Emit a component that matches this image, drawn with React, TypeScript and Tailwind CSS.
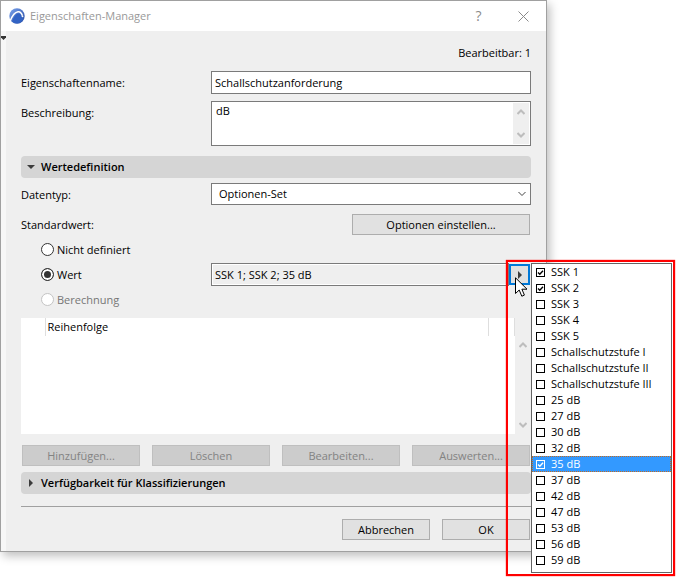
import { useState } from 'react'
import type { ReactNode } from 'react'

const OPTIONS = [
  'SSK 1', 'SSK 2', 'SSK 3', 'SSK 4', 'SSK 5',
  'Schallschutzstufe I', 'Schallschutzstufe II', 'Schallschutzstufe III',
  '25 dB', '27 dB', '30 dB', '32 dB', '35 dB', '37 dB', '42 dB', '47 dB', '53 dB', '56 dB', '59 dB',
]

function AppLogo() {
  return (
    <svg viewBox="0 0 16 16" className="h-4 w-4 shrink-0" aria-hidden="true">
      <defs>
        <linearGradient id="logo" x1="0" y1="0" x2="1" y2="1">
          <stop offset="0" stopColor="#7ba4ee" />
          <stop offset="1" stopColor="#2347a0" />
        </linearGradient>
      </defs>
      <circle cx="8" cy="8" r="7.7" fill="url(#logo)" />
      <path d="M1.300 12.800C3 8.200 5.600 4.300 9 3.700c2-0.300 3.600 1.300 4.400 4" fill="none" stroke="#fff" strokeWidth="1.500" />
      <path d="M3 13.600C4.600 9.400 6.500 6 9.200 5.400c2.400 0 3.900 3 4.600 6.600-2.300 3.600-7.600 4.600-10.800 1.600z" fill="#3263c4" />
      <circle cx="13.500" cy="8.300" r="0.900" fill="#fff" />
    </svg>
  )
}

function Triangle({ open = false }: { open?: boolean }) {
  return (
    <svg viewBox="0 0 8 8" className="h-2 w-2 shrink-0 fill-[#3c3c3c]" aria-hidden="true">
      {open ? <path d="M0 2h8L4 6z" /> : <path d="M2 0v8L6 4z" />}
    </svg>
  )
}

function Chevron({ up = false, className = '' }: { up?: boolean; className?: string }) {
  return (
    <svg viewBox="0 0 8 6" className={`h-1.5 w-2 fill-none ${className}`} aria-hidden="true">
      <path d={up ? 'M0.500 5L4 1.500L7.500 5' : 'M0.500 1L4 4.500L7.500 1'} />
    </svg>
  )
}

function ScrollTrack({ className = '' }: { className?: string }) {
  return (
    <div className={`flex w-4 shrink-0 flex-col items-center justify-between bg-[#efefef] ${className}`}>
      <Chevron up className="stroke-[#bdbdbd] stroke-2" />
      <Chevron className="stroke-[#bdbdbd] stroke-2" />
    </div>
  )
}

function PushButton({ children, disabled = false, className = '' }: { children: ReactNode; disabled?: boolean; className?: string }) {
  return (
    <button
      type="button"
      disabled={disabled}
      className={`h-[21px] border border-[#adadad] bg-[#e1e1e1] leading-4 disabled:border-[#bfbfbf] disabled:bg-[#cccccc] disabled:text-[#838383] ${className}`}
    >
      {children}
    </button>
  )
}

function SectionHeader({ title, open = false }: { title: string; open?: boolean }) {
  return (
    <button type="button" aria-expanded={open} className="flex h-[22px] w-full items-center gap-1.5 rounded-sm bg-[#d5d5d5] pl-1.5 text-left font-semibold">
      <Triangle open={open} />
      {title}
    </button>
  )
}

function RadioOption({ label, value, disabled = false, selected, onSelect }: { label: string; value: string; disabled?: boolean; selected: string; onSelect: (value: string) => void }) {
  return (
    <label className={`flex h-[25px] items-center gap-[3px] pl-5 ${disabled ? 'text-[#767676]' : ''}`}>
      <input
        type="radio"
        name="default-value"
        value={value}
        disabled={disabled}
        checked={selected === value}
        onChange={() => onSelect(value)}
        className="h-[13px] w-[13px] appearance-none rounded-full border border-[#333333] bg-white checked:bg-[#333333] checked:shadow-[inset_0_0_0_2px_#fff] disabled:border-[#c4c4c4]"
      />
      {label}
    </label>
  )
}

function OptionsMenu({ checked, onToggle }: { checked: string[]; onToggle: (option: string) => void }) {
  return (
    <ul className="absolute -top-px left-full z-10 ml-px w-[141px] border border-[#646464] bg-white pb-1">
      {OPTIONS.map((option) => {
        const active = option === '35 dB'
        return (
          <li key={option}>
            <label className={`flex h-4 items-center gap-1.5 pl-1 whitespace-nowrap ${active ? 'bg-[#3399ff] text-white outline-1 -outline-offset-1 outline-[#c56a1d] outline-dotted' : ''}`}>
              <span className="grid h-[9px] w-[9px]">
                <input
                  type="checkbox"
                  checked={checked.includes(option)}
                  onChange={() => onToggle(option)}
                  className={`peer h-[9px] w-[9px] appearance-none border [grid-area:1/1] ${active ? 'border-white' : 'border-black bg-white'}`}
                />
                <svg viewBox="0 0 9 9" className="pointer-events-none invisible h-[9px] w-[9px] fill-none stroke-current [grid-area:1/1] peer-checked:visible" aria-hidden="true">
                  <path d="M2 4.500L3.800 6.300L7 2.800" strokeWidth="1.400" />
                </svg>
              </span>
              {option}
            </label>
          </li>
        )
      })}
    </ul>
  )
}

function Pointer() {
  return (
    <svg viewBox="0 0 13 21" className="pointer-events-none absolute top-[13px] left-1.5 z-20 h-[21px] w-[13px]" aria-hidden="true">
      <path d="M0.500 0.800V16.500L4.200 13L6.800 19.200L9.400 18.100L6.900 12.200H12z" fill="#fff" stroke="#000" />
    </svg>
  )
}

export default function App() {
  const [mode, setMode] = useState('value')
  const [checked, setChecked] = useState(['SSK 1', 'SSK 2', '35 dB'])

  const toggle = (option: string) => {
    setChecked(OPTIONS.filter((o) => (o === option ? !checked.includes(o) : checked.includes(o))))
  }

  return (
    <main className="bg-white pr-[129px] pb-[25px] font-['Open_Sans','Noto_Sans',sans-serif] text-[11px] leading-4 text-black">
      <div className="border border-[#a0a0a0] bg-[#efefef] shadow-[3px_4px_9px_rgba(0,0,0,0.25)]">
        <header className="flex h-[30px] items-center bg-white pl-2">
          <AppLogo />
          <h1 className="ml-[5px] flex-1 text-[#999999]">Eigenschaften-Manager</h1>
          <button type="button" aria-label="Hilfe" className="w-[45px] text-sm text-[#8a8a8a]">?</button>
          <button type="button" aria-label="Schließen" className="flex w-[45px] justify-center">
            <svg viewBox="0 0 11 11" className="h-[11px] w-[11px] stroke-[#8a8a8a]" aria-hidden="true">
              <path d="M0.500 0.500L10.500 10.500M10.500 0.500L0.500 10.500" />
            </svg>
          </button>
        </header>

        <div className="flex">
          <div className="w-[5px] shrink-0 bg-[#f7f7f7] pt-[5px]">
            <svg viewBox="0 0 5 4" className="h-1 w-[5px] fill-[#333333]" aria-hidden="true">
              <path d="M0 0h5v1.500L2.500 4L0 1.500z" />
            </svg>
          </div>

          <div className="min-w-0 flex-1 pr-[15px] pb-[11px] pl-[15px]">
            <p className="pt-3.5 text-right">Bearbeitbar: 1</p>

            <div className="mt-2.5 grid grid-cols-[190px_1fr] gap-y-[7px]">
              <label htmlFor="name" className="pt-1">Eigenschaftenname:</label>
              <input id="name" defaultValue="Schallschutzanforderung" className="h-[23px] min-w-0 border border-[#7a7a7a] bg-white px-[3px]" />
              <label htmlFor="description" className="pt-1">Beschreibung:</label>
              <div className="flex h-[45px] border border-[#7a7a7a] bg-white p-px">
                <textarea id="description" defaultValue="dB" className="min-w-0 flex-1 resize-none overflow-hidden px-[3px]" />
                <ScrollTrack className="py-1.5" />
              </div>
            </div>

            <div className="mt-2.5">
              <SectionHeader title="Wertedefinition" open />
            </div>

            <div className="mt-[5px] grid grid-cols-[190px_1fr]">
              <label htmlFor="type" className="pt-1">Datentyp:</label>
              <div className="relative">
                <select id="type" className="block h-[22px] w-full appearance-none border border-[#7a7a7a] bg-white px-[7px]">
                  <option>Optionen-Set</option>
                </select>
                <Chevron className="pointer-events-none absolute top-2 right-[5px] stroke-[#444444]" />
              </div>
            </div>

            <div className="mt-[9px] flex items-center justify-between pr-px">
              <span>Standardwert:</span>
              <PushButton className="w-[178px]">Optionen einstellen...</PushButton>
            </div>

            <div role="radiogroup" aria-label="Standardwert" className="mt-0.5">
              <RadioOption label="Nicht definiert" value="undefined" selected={mode} onSelect={setMode} />
              <div className="grid h-[25px] grid-cols-[190px_1fr] items-center">
                <RadioOption label="Wert" value="value" selected={mode} onSelect={setMode} />
                <div className="flex items-center pr-px">
                  <input aria-label="Wert" readOnly value={checked.join('; ')} className="h-[23px] min-w-0 flex-1 border border-[#7a7a7a] bg-[#efefef] px-[3px] shadow-[inset_0_0_0_1px_#fff]" />
                  <div className="relative">
                    <button type="button" aria-label="Optionen wählen" aria-expanded="true" className="flex h-[21px] w-[21px] items-center justify-center border-2 border-[#0078d7] bg-[#e1e1e1]">
                      <Triangle />
                    </button>
                    <OptionsMenu checked={checked} onToggle={toggle} />
                    <div className="pointer-events-none absolute -top-1 -left-[3px] z-20 h-[316px] w-[169px] border-2 border-[#ff0000] shadow-[0_0_1px_#ff0000]" />
                    <Pointer />
                  </div>
                </div>
              </div>
              <RadioOption label="Berechnung" value="calculated" disabled selected={mode} onSelect={setMode} />
            </div>

            <div className="mt-1.5 flex h-[116px] bg-white">
              <div className="min-w-0 flex-1">
                <table className="w-full table-fixed border-collapse">
                  <thead>
                    <tr className="h-[18px]">
                      <th className="w-6" />
                      <th className="border-x border-[#dedede] px-0.5 text-left font-normal">Reihenfolge</th>
                      <th className="w-[26px] border-r border-[#dedede]" />
                    </tr>
                  </thead>
                </table>
              </div>
              <ScrollTrack className="pt-6 pb-1.5" />
            </div>

            <div className="mt-[11px] grid grid-cols-4 gap-3 px-px">
              <PushButton disabled>Hinzufügen...</PushButton>
              <PushButton disabled>Löschen</PushButton>
              <PushButton disabled>Bearbeiten...</PushButton>
              <PushButton disabled>Auswerten...</PushButton>
            </div>

            <div className="mt-1.5">
              <SectionHeader title="Verfügbarkeit für Klassifizierungen" />
            </div>

            <footer className="mt-3 flex justify-end gap-3 border-t border-[#a0a0a0] pt-3 pr-px">
              <PushButton className="w-[88px]">Abbrechen</PushButton>
              <PushButton className="w-[88px]">OK</PushButton>
            </footer>
          </div>
        </div>
      </div>
    </main>
  )
}
